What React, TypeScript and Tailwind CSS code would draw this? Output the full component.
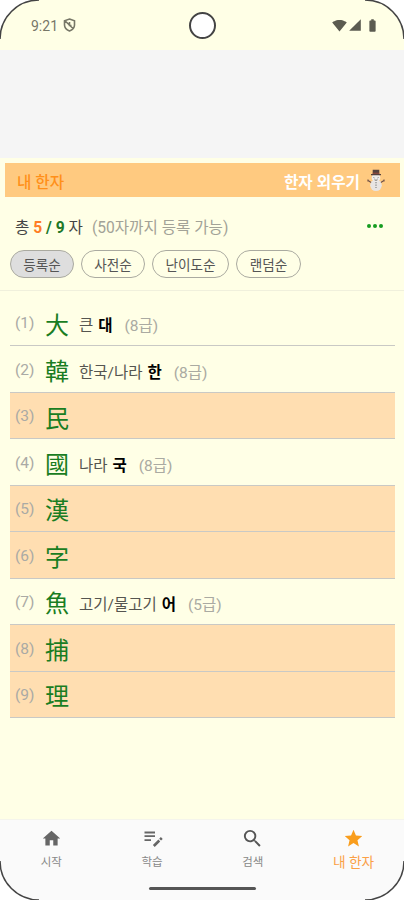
import { MdHome, MdSearch, MdStar, MdSignalWifi4Bar, MdSignalCellular4Bar, MdBatteryFull } from 'react-icons/md';

const StudyIcon = ({ size = 21, className = '' }) => (
  <svg width={size} height={size} viewBox="0 0 21 21" className={className} fill="none" stroke="currentColor">
    <path d="M2.5 4.5h10.5M2.5 8.2h10.5M2.5 12.2h6.5" strokeWidth="1.8" />
    <path d="M11.8 18l5.5-5.5M18.1 11.7l1.7-1.7" strokeWidth="2.6" />
  </svg>
);

const filters = [
  { label: '등록순', active: true, width: 'w-16' },
  { label: '사전순', active: false, width: 'w-16' },
  { label: '난이도순', active: false, width: 'w-[77px]' },
  { label: '랜덤순', active: false, width: 'w-[65px]' },
];

const hanjaList = [
  { char: '大', meaning: '큰', sound: '대', level: '(8급)' },
  { char: '韓', meaning: '한국/나라', sound: '한', level: '(8급)' },
  { char: '民' },
  { char: '國', meaning: '나라', sound: '국', level: '(8급)' },
  { char: '漢' },
  { char: '字' },
  { char: '魚', meaning: '고기/물고기', sound: '어', level: '(5급)' },
  { char: '捕' },
  { char: '理' },
];

const tabs = [
  { icon: MdHome, size: 21, label: '시작', color: 'text-[#666666]', text: 'text-[11.5px] text-[#888888]' },
  { icon: StudyIcon, size: 21, label: '학습', color: 'text-[#666666]', text: 'text-[11.5px] text-[#888888]' },
  { icon: MdSearch, size: 23, label: '검색', color: 'text-[#555555]', text: 'text-[11.5px] text-[#888888]' },
  { icon: MdStar, size: 21, label: '내 한자', color: 'text-[#f99d1c]', text: 'text-[13.7px] text-[#fba046]' },
];

const Snowman = () => (
  <svg width="18" height="24" viewBox="0 0 18 24">
    <path d="M1 12.5l4 2.5M17 12.5l-4 2.5M1 11.5v2M17 11.5v2" stroke="#705046" strokeWidth="1.2" />
    <circle cx="9" cy="17.3" r="5.8" fill="#e8e5e3" />
    <circle cx="9" cy="9.8" r="4.3" fill="#eeebe9" />
    <path d="M5.7 1.8h6.6v4.7H5.7z" fill="#55413d" />
    <path d="M4 6h10v1.2H4z" fill="#55413d" />
    <path d="M5.7 4.7h6.6v1H5.7z" fill="#9b4b3e" />
    <path d="M6.5 9.5l1 .5M11.5 9.5l-1 .5M7.5 11.8q1.5 1 3 0M9 14v1.3M9 16.5v1.3M9 19v1" stroke="#666666" strokeWidth=".9" fill="none" />
  </svg>
);

const StatusBar = () => (
  <div className="h-[50px] flex items-center justify-between pl-[31px] pr-[24px] relative">
    <div className="flex items-center gap-[5px] text-[#777768]">
      <span className="font-[Roboto] text-[14px] leading-none mt-px">9:21</span>
      <svg width="13" height="14" viewBox="0 0 13 14" fill="none" stroke="currentColor" strokeWidth="1.6">
        <path d="M6.5 1L11.5 2.7V7q0 4-5 6-5-2-5-6V2.7zM2.2 3l7.8 7.5M6.5 4v3.5h2" />
      </svg>
    </div>
    <div className="absolute left-[189px] top-[12px] w-[27px] h-[27px] rounded-full bg-white border-2 border-[#444444]" />
    <div className="flex items-center text-[#5b5b50]">
      <MdSignalWifi4Bar size={15} />
      <MdSignalCellular4Bar size={14} className="ml-[1px]" />
      <MdBatteryFull size={15} className="ml-[3px]" />
    </div>
  </div>
);

const App = () => {
  return (
    <div className="w-[404px] h-[900px] bg-white relative overflow-hidden font-['Roboto','Noto_Sans_CJK_KR',sans-serif]">
      <div className="h-full flex flex-col bg-[#ffffe6] rounded-[39px] overflow-hidden">
        <StatusBar />
        <div className="h-[108px] bg-[#f5f5f5]" />

        {/* Title */}
        <div className="mt-[5px] ml-[5px] mr-1 h-[34px] bg-[#ffca80] flex items-center justify-between pl-3 pr-[15px] text-[15.7px] font-bold">
          <span className="text-[#ff9019] font-medium mt-[6px]">내 한자</span>
          <div className="flex items-center gap-[7px] text-white">
            <span className="mt-[6px]">한자 외우기</span>
            <Snowman />
          </div>
        </div>

        {/* Count and sort order */}
        <div className="h-[94px] border-b border-[#f0f0dc] px-[10px] pt-[17px]">
          <div className="h-[26px] flex items-center justify-between pl-[5px] pr-[11px] text-[15.6px] text-[#444444]">
            <div className="whitespace-pre mt-[3px]">
              총 <b className="text-[#ff7d25]">5</b><b className="text-[#207828]"> / 9</b> 자
              <span className="ml-[9px] text-[#a2a297]">(50자까지 등록 가능)</span>
            </div>
            <div className="flex gap-[2px] -mt-[3px]">
              <i className="w-1 h-1 rounded-full bg-[#169c20]" />
              <i className="w-1 h-1 rounded-full bg-[#169c20]" />
              <i className="w-1 h-1 rounded-full bg-[#169c20]" />
            </div>
          </div>
          <div className="mt-[10px] flex gap-[7px]">
            {filters.map((item) => (
              <button key={item.label} className={`h-7 ${item.width} pt-[3px] shrink-0 rounded-full border border-[#aaaaa0] text-[13.6px] leading-none text-[#555555] ${item.active ? 'bg-[#dedede]' : ''}`}>
                {item.label}
              </button>
            ))}
          </div>
        </div>

        {/* Hanja list */}
        <div className="mt-[9px] ml-[10px] mr-[9px] h-[418px] flex flex-col">
          {hanjaList.map((item, i) => (
            <div key={item.char} className={`flex-1 flex items-center pl-[5px] pt-[5px] border-b border-[#c9c9c5] ${item.meaning ? '' : 'bg-[#ffdeb1]'}`}>
              <span className="w-[30px] text-[15.5px] leading-none -mt-[2px] text-[#aaaaa5]">({i + 1})</span>
              <span className="w-[34px] text-[24px] leading-none mt-px text-[#197d22]">{item.char}</span>
              {item.meaning && (
                <div className="flex items-center text-[15.5px] leading-5 mt-[2px]">
                  <span className="text-[#555550]">{item.meaning}</span>
                  <b className="ml-[5px] text-black">{item.sound}</b>
                  <span className="ml-3 text-[#aaaaa2]">{item.level}</span>
                </div>
              )}
            </div>
          ))}
        </div>

        {/* Bottom tabs */}
        <div className="mt-auto h-[81px] bg-[#fafafa] border-t border-[#f5f5ec] relative">
          <div className="grid grid-cols-4 pt-[8px] pl-px">
            {tabs.map((tab) => (
              <div key={tab.label} className="flex flex-col items-center">
                <div className="h-[21px] flex items-center">
                  <tab.icon size={tab.size} className={tab.color} />
                </div>
                <span className={`h-[18px] mt-[4px] leading-[18px] whitespace-nowrap ${tab.text}`}>{tab.label}</span>
              </div>
            ))}
          </div>
          <div className="absolute left-[149px] bottom-[10px] w-[107px] h-[3px] rounded-full bg-[#555555]" />
        </div>
      </div>

      {/* Device corners */}
      <svg className="absolute inset-0 pointer-events-none" width="404" height="900" fill="none" stroke="#444444" strokeWidth="1.5">
        <path d="M0 39A39 39 0 0 1 39 0M365 0A39 39 0 0 1 404 39M404 861A39 39 0 0 1 365 900M39 900A39 39 0 0 1 0 861" />
      </svg>
    </div>
  );
};

export default App;
